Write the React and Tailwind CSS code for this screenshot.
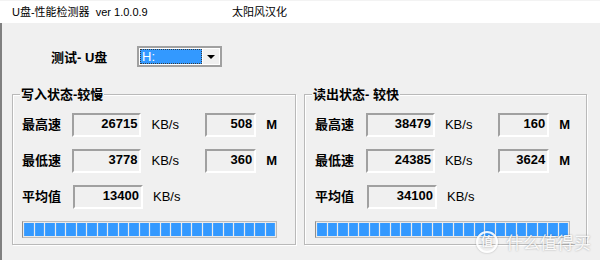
import React from 'react';

const FONT = { fontFamily: '"Liberation Sans", "Noto Sans CJK SC", sans-serif' };

function Field({ value, width }) {
  return (
    <div
      className={`h-[24px] ${width} flex items-center justify-end pr-[2px] pb-[2px] bg-[#f0f0f0] border-2 border-t-[#a0a0a0] border-l-[#a0a0a0] border-r-white border-b-white text-[13px] font-bold text-black`}
    >
      {value}
    </div>
  );
}

function StatRow({ label, speed, size, labelW, kbW }) {
  return (
    <div className="flex items-center h-[24px]">
      <span className={`${labelW} text-[13px] font-bold`}>{label}</span>
      <Field value={speed} width="w-[70px]" />
      <span className={`${kbW} pl-[10px] text-[13px]`}>KB/s</span>
      {size !== undefined ? (
        <>
          <Field value={size} width="w-[52px]" />
          <span className="pl-[10px] text-[13px] font-bold">M</span>
        </>
      ) : null}
    </div>
  );
}

function Progress() {
  const segs = Array.from({ length: 24 });
  return (
    <div className="h-[17px] flex gap-[1px] p-[1px] bg-[#eaeaea] border border-[#bcbcbc] border-l-[#8f8f8f]">
      {segs.map((_, i) => (
        <div key={i} className="flex-1 bg-[#3399ff] border-x border-[#45a2ff]" />
      ))}
    </div>
  );
}

function Group({ title, rows, padL, padR, labelW, kbW }) {
  return (
    <div className="relative w-full h-[151px] border border-[#b9b9b9] shadow-[inset_1px_1px_0_#ffffff,1px_1px_0_#ffffff]">
      {/* group caption sits over the top border */}
      <span className="absolute top-[-8px] left-[7px] px-[1px] bg-[#f0f0f0] text-[13px] font-bold leading-[15px]">
        {title}
      </span>
      <div className={`flex flex-col gap-[12px] pt-[18px] ${padL} ${padR}`}>
        {rows.map((r) => (
          <StatRow key={r.label} {...r} labelW={labelW} kbW={kbW} />
        ))}
      </div>
      <div className={`mt-[12px] ${padL} ${padR}`}>
        <Progress />
      </div>
    </div>
  );
}

export default function App() {
  return (
    <div className="relative w-[600px] h-[260px] overflow-hidden bg-[#f0f0f0] text-black" style={FONT}>
      {/* title bar */}
      <div className="h-[23px] bg-white border-t border-[#f3f3f3] flex items-center pl-[12px] text-[11px]">
        <span className="w-[220px] whitespace-pre">U盘-性能检测器  ver 1.0.0.9</span>
        <span>太阳风汉化</span>
      </div>

      <div className="h-[237px] border-l-2 border-[#808080]">
        {/* drive chooser */}
        <div className="flex items-center pt-[23px] pl-[49px]">
          <span className="w-[86px] text-[13px] font-bold pt-[2px]">测试- U盘</span>
          <div className="w-[85px] h-[21px] flex items-stretch bg-white border-2 border-[#a0a0a0] p-[1px]">
            <div className="flex-1 flex items-center bg-[#3399ff] text-white text-[13px] pl-[2px] outline-1 outline-dotted outline-[#3a3a3a] outline-offset-[-1px]">
              H:
            </div>
            <div className="w-[16px] flex items-center justify-center bg-[#f0f0f0] ml-[1px]">
              <div className="w-0 h-0 border-l-[4px] border-r-[4px] border-t-[4px] border-l-transparent border-r-transparent border-t-black" />
            </div>
          </div>
        </div>

        {/* two group boxes */}
        <div className="flex mt-[26px] pl-[10px] gap-[8px] pr-[12px]">
          <div className="w-[284px]">
            <Group
              title="写入状态-较慢"
              padL="pl-[9px]"
              padR="pr-[18px]"
              labelW="w-[51px]"
              kbW="w-[64px]"
              rows={[
                { label: '最高速', speed: '26715', size: '508' },
                { label: '最低速', speed: '3778', size: '360' },
                { label: '平均值', speed: '13400' },
              ]}
            />
          </div>
          <div className="w-[283px]">
            <Group
              title="读出状态- 较快"
              padL="pl-[10px]"
              padR="pr-[16px]"
              labelW="w-[52px]"
              kbW="w-[64px]"
              rows={[
                { label: '最高速', speed: '38479', size: '160' },
                { label: '最低速', speed: '24385', size: '3624' },
                { label: '平均值', speed: '34100' },
              ]}
            />
          </div>
        </div>
      </div>

      {/* watermark over the corner */}
      <div className="absolute left-[476px] top-[229px] flex items-center gap-[8px] text-white/90 [text-shadow:0_0_2px_rgba(0,0,0,0.35)]">
        <div className="w-[22px] h-[22px] rounded-full border-2 border-white/90 flex items-center justify-center text-[12px] font-bold shadow-[0_0_2px_rgba(0,0,0,0.3)]">
          值
        </div>
        <span className="text-[17px]" style={{ fontFamily: '"Noto Sans CJK SC", sans-serif' }}>
          什么值得买
        </span>
      </div>
    </div>
  );
}
